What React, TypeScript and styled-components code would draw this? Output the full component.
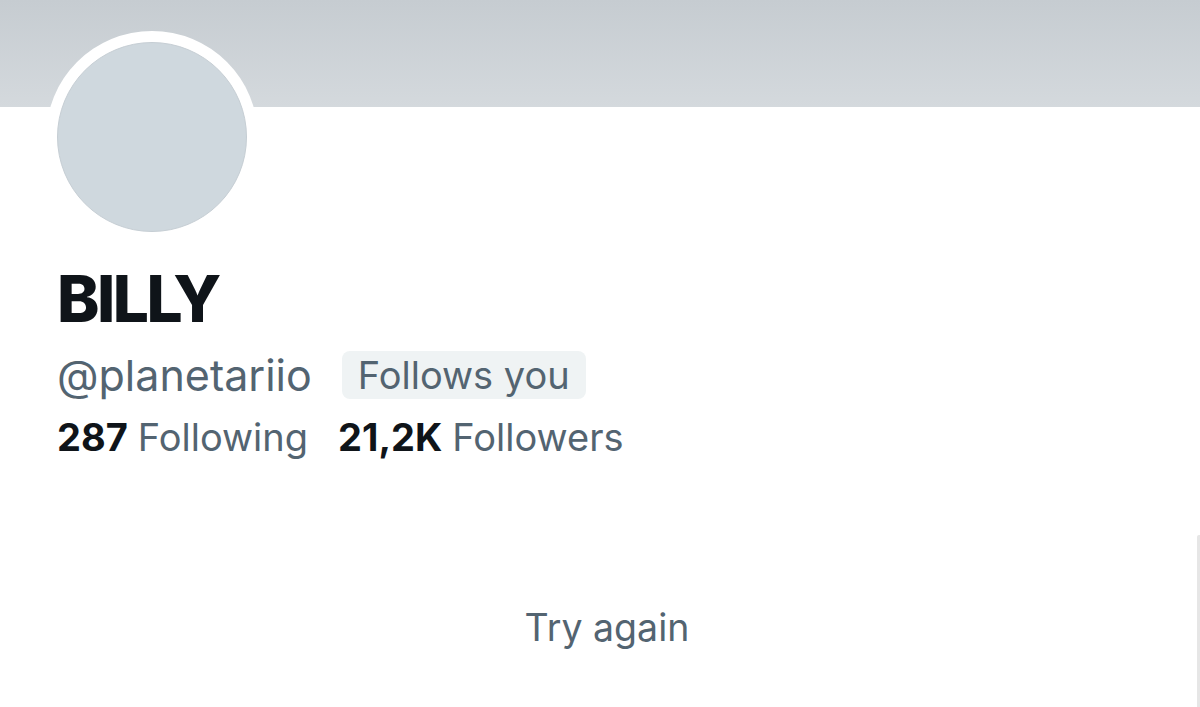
import React from "react";
import styled, { createGlobalStyle } from "styled-components";

const Global = createGlobalStyle`
  html, body { margin: 0; padding: 0; background: #ffffff; }
  body { font-family: "Inter", "Roboto", "Liberation Sans", sans-serif; -webkit-font-smoothing: antialiased; }
  #root { width: 1200px; height: 707px; overflow: hidden; }
`;

const Page = styled.div`
  position: relative;
  width: 1200px;
  height: 707px;
  background: #ffffff;
  display: flex;
  flex-direction: column;
`;

const Banner = styled.div`
  height: 107px;
  flex: none;
  background: linear-gradient(180deg, #c6ccd1 0%, #d4d9dd 100%);
`;

const Profile = styled.div`
  display: flex;
  flex-direction: column;
  padding-left: 46px;
`;

const Avatar = styled.div`
  width: 212px;
  height: 212px;
  margin-top: -76px;
  box-sizing: border-box;
  border-radius: 50%;
  background: #ffffff;
  padding: 11px;
  position: relative;
`;

const AvatarFace = styled.div`
  width: 100%;
  height: 100%;
  box-sizing: border-box;
  border-radius: 50%;
  background: #cfd8de;
  border: 1px solid #c6ced4;
`;

const Info = styled.div`
  display: flex;
  flex-direction: column;
  padding-left: 11px;
`;

const Name = styled.h1`
  margin: 18px 0 0 0;
  font-size: 64px;
  line-height: 76px;
  font-weight: 800;
  color: #0f1419;
  letter-spacing: -2.5px;
`;

const HandleRow = styled.div`
  display: flex;
  align-items: center;
  gap: 30px;
  margin-top: 14px;
`;

const Handle = styled.span`
  font-size: 43px;
  line-height: 48px;
  color: #536471;
  font-weight: 400;
`;

const Pill = styled.span`
  display: inline-flex;
  align-items: center;
  height: 48px;
  padding: 0 16px;
  border-radius: 8px;
  background: #eff3f4;
  color: #536471;
  font-size: 38px;
`;

const Stats = styled.div`
  display: flex;
  gap: 30px;
  margin-top: 14px;
  font-size: 38px;
  line-height: 48px;
`;

const Stat = styled.span`
  color: #536471;
  b {
    color: #0f1419;
    font-weight: 700;
    margin-right: 10px;
  }
`;

const Retry = styled.div`
  flex: 1;
  display: flex;
  justify-content: center;
  align-items: flex-start;
  padding-top: 143px;
  padding-left: 14px;
  font-size: 37.5px;
  line-height: 48px;
  color: #536471;
`;

const ScrollTrack = styled.div`
  position: absolute;
  right: 0;
  top: 535px;
  bottom: 0;
  width: 3px;
  background: #e6e6e6;
  border-radius: 2px 0 0 0;
`;

export default function App() {
  return (
    <Page>
      <Global />
      <Banner />
      <Profile>
        <Avatar>
          <AvatarFace />
        </Avatar>
        <Info>
          <Name>BILLY</Name>
          <HandleRow>
            <Handle>@planetariio</Handle>
            <Pill>Follows you</Pill>
          </HandleRow>
          <Stats>
            <Stat><b>287</b>Following</Stat>
            <Stat><b>21,2K</b>Followers</Stat>
          </Stats>
        </Info>
      </Profile>
      <Retry>Try again</Retry>
      <ScrollTrack />
    </Page>
  );
}
